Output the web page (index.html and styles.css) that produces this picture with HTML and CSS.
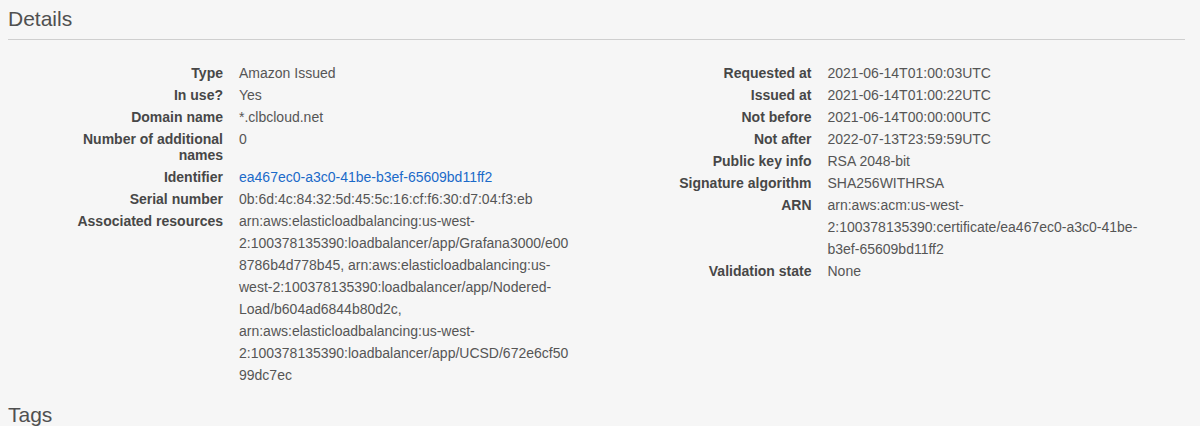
FILE: index.html
```html
<!DOCTYPE html>
<html lang="en">
<head>
    <meta charset="UTF-8">
    <meta name="viewport" content="width=device-width, initial-scale=1.0">
    <title>Certificate details</title>
    <link rel="stylesheet" href="styles.css">
</head>
<body>
    <section class="panel">
        <h2 class="panel-title">Details</h2>
        <div class="details">
            <dl class="props">
                <dt>Type</dt>
                <dd>Amazon Issued</dd>
                <dt>In use?</dt>
                <dd>Yes</dd>
                <dt>Domain name</dt>
                <dd>*.clbcloud.net</dd>
                <dt>Number of additional names</dt>
                <dd>0</dd>
                <dt>Identifier</dt>
                <dd><a class="link" href="#">ea467ec0-a3c0-41be-b3ef-65609bd11ff2</a></dd>
                <dt>Serial number</dt>
                <dd>0b:6d:4c:84:32:5d:45:5c:16:cf:f6:30:d7:04:f3:eb</dd>
                <dt>Associated resources</dt>
                <dd>arn:aws:elasticloadbalancing:us-west-2:100378135390:loadbalancer/app/Grafana3000/e008786b4d778b45, arn:aws:elasticloadbalancing:us-west-2:100378135390:loadbalancer/app/Nodered-Load/b604ad6844b80d2c, arn:aws:elasticloadbalancing:us-west-2:100378135390:loadbalancer/app/UCSD/672e6cf5099dc7ec</dd>
            </dl>
            <dl class="props">
                <dt>Requested at</dt>
                <dd>2021-06-14T01:00:03UTC</dd>
                <dt>Issued at</dt>
                <dd>2021-06-14T01:00:22UTC</dd>
                <dt>Not before</dt>
                <dd>2021-06-14T00:00:00UTC</dd>
                <dt>Not after</dt>
                <dd>2022-07-13T23:59:59UTC</dd>
                <dt>Public key info</dt>
                <dd>RSA 2048-bit</dd>
                <dt>Signature algorithm</dt>
                <dd>SHA256WITHRSA</dd>
                <dt>ARN</dt>
                <dd>arn:aws:acm:us-west-2:100378135390:certificate/ea467ec0-a3c0-41be-b3ef-65609bd11ff2</dd>
                <dt>Validation state</dt>
                <dd>None</dd>
            </dl>
        </div>
    </section>
    <section class="panel">
        <h2 class="panel-title">Tags</h2>
    </section>
</body>
</html>
```

FILE: styles.css
```css
body {
    margin: 0;
    padding: 0 15px 0 8px;
    background-color: #f6f6f6;
    color: #444;
    font-family: "Liberation Sans", Arial, sans-serif;
    font-size: 14px;
}
.panel-title {
    margin: 0;
    padding: 5px 0 6px;
    font-size: 21px;
    line-height: 28px;
    font-weight: normal;
    color: #505050;
    border-bottom: 1px solid #cfcfcf;
}
.details {
    display: grid;
    grid-template-columns: 1fr 1fr;
    margin: 22px 0 10px;
}
.props {
    display: grid;
    grid-template-columns: 215px 333px;
    column-gap: 16px;
    align-content: start;
    margin: 0;
}
.props dt {
    padding: 3px 0 3px 40px;
    line-height: 16px;
    font-weight: bold;
    text-align: right;
    color: #474747;
}
.props dd {
    margin: 0;
    line-height: 22px;
    color: #555;
    overflow-wrap: break-word;
}
.link {
    color: #1b6ac9;
    text-decoration: none;
}
```
